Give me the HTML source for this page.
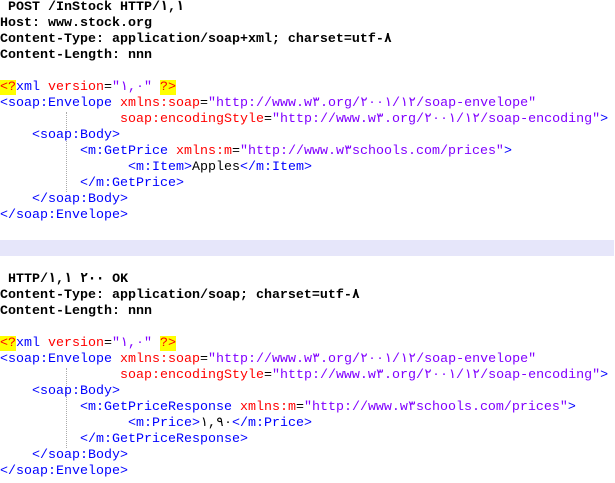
<!DOCTYPE html>
<html><head><meta charset="utf-8"><style>
body{margin:0;background:#fff;width:615px;height:483px;overflow:hidden;position:relative}
pre{margin:0;font-family:"Liberation Mono","DejaVu Sans Mono",monospace;font-size:13.33px;line-height:16px;color:#000;position:absolute;left:0;top:0;white-space:pre;direction:ltr;unicode-bidi:bidi-override}
pre span{unicode-bidi:bidi-override;direction:ltr}
.h{font-weight:bold}
.t{color:#0000ff}.a{color:#ff0000}.v{color:#8000ff}
.y{background:#ffff00;color:#ff0000}
.band{position:absolute;left:0;top:240px;width:614px;height:16px;background:#e6e6fa}
.g{position:absolute;left:66px;width:0;border-left:1px dotted #aaa}
</style></head><body>
<div class="band"></div>
<div class="g" style="top:112px;height:80px"></div>
<div class="g" style="top:368px;height:80px"></div>
<pre><span class="h"> POST /InStock HTTP/١,١
Host: www.stock.org
Content-Type: application/soap+xml; charset=utf-٨
Content-Length: nnn</span>

<span class="y">&lt;?</span><span class="t">xml</span> <span class="a">version</span>=<span class="v">"١,٠"</span> <span class="y">?&gt;</span>
<span class="t">&lt;soap:Envelope</span> <span class="a">xmlns:soap</span>=<span class="v">"http://www.w٣.org/٢٠٠١/١٢/soap-envelope"</span>
               <span class="a">soap:encodingStyle</span>=<span class="v">"http://www.w٣.org/٢٠٠١/١٢/soap-encoding"</span><span class="t">&gt;</span>
    <span class="t">&lt;soap:Body&gt;</span>
          <span class="t">&lt;m:GetPrice</span> <span class="a">xmlns:m</span>=<span class="v">"http://www.w٣schools.com/prices"</span><span class="t">&gt;</span>
                <span class="t">&lt;m:Item&gt;</span>Apples<span class="t">&lt;/m:Item&gt;</span>
          <span class="t">&lt;/m:GetPrice&gt;</span>
    <span class="t">&lt;/soap:Body&gt;</span>
<span class="t">&lt;/soap:Envelope&gt;</span>



<span class="h"> HTTP/١,١ ٢٠٠ OK
Content-Type: application/soap; charset=utf-٨
Content-Length: nnn</span>

<span class="y">&lt;?</span><span class="t">xml</span> <span class="a">version</span>=<span class="v">"١,٠"</span> <span class="y">?&gt;</span>
<span class="t">&lt;soap:Envelope</span> <span class="a">xmlns:soap</span>=<span class="v">"http://www.w٣.org/٢٠٠١/١٢/soap-envelope"</span>
               <span class="a">soap:encodingStyle</span>=<span class="v">"http://www.w٣.org/٢٠٠١/١٢/soap-encoding"</span><span class="t">&gt;</span>
    <span class="t">&lt;soap:Body&gt;</span>
          <span class="t">&lt;m:GetPriceResponse</span> <span class="a">xmlns:m</span>=<span class="v">"http://www.w٣schools.com/prices"</span><span class="t">&gt;</span>
                <span class="t">&lt;m:Price&gt;</span>١,٩٠<span class="t">&lt;/m:Price&gt;</span>
          <span class="t">&lt;/m:GetPriceResponse&gt;</span>
    <span class="t">&lt;/soap:Body&gt;</span>
<span class="t">&lt;/soap:Envelope&gt;</span></pre>
</body></html>
